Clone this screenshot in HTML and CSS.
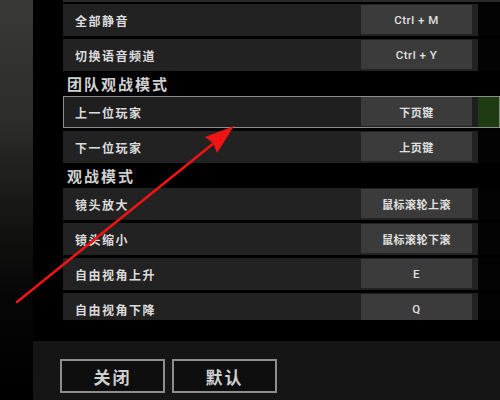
FILE: index.html
```html
<!DOCTYPE html>
<html lang="zh-CN">
<head>
    <meta charset="UTF-8">
    <title>按键设置</title>
    <link rel="stylesheet" href="styles.css">
</head>
<body>
    <div class="screen">
        <div class="backdrop"></div>
        <div class="panel">
            <div class="list">
                <div class="row row-cut"></div>
                <div class="row">
                    <div class="label">全部静音</div>
                    <div class="key key-latin">Ctrl + M</div>
                    <div class="extra"></div>
                </div>
                <div class="row">
                    <div class="label">切换语音频道</div>
                    <div class="key key-latin">Ctrl + Y</div>
                    <div class="extra"></div>
                </div>
                <div class="section">团队观战模式</div>
                <div class="row row-active">
                    <div class="label">上一位玩家</div>
                    <div class="key">下页键</div>
                    <div class="extra extra-on"></div>
                </div>
                <div class="row">
                    <div class="label">下一位玩家</div>
                    <div class="key">上页键</div>
                    <div class="extra"></div>
                </div>
                <div class="section">观战模式</div>
                <div class="row">
                    <div class="label">镜头放大</div>
                    <div class="key">鼠标滚轮上滚</div>
                    <div class="extra"></div>
                </div>
                <div class="row">
                    <div class="label">镜头缩小</div>
                    <div class="key">鼠标滚轮下滚</div>
                    <div class="extra"></div>
                </div>
                <div class="row">
                    <div class="label">自由视角上升</div>
                    <div class="key key-latin">E</div>
                    <div class="extra"></div>
                </div>
                <div class="row">
                    <div class="label">自由视角下降</div>
                    <div class="key key-latin">Q</div>
                    <div class="extra"></div>
                </div>
            </div>
            <div class="footer">
                <button class="btn">关闭</button>
                <button class="btn">默认</button>
            </div>
        </div>

        <!-- 标注箭头 -->
        <svg class="arrow" width="500" height="400" viewBox="0 0 500 400">
            <line x1="17" y1="302" x2="214" y2="143" stroke="#f01414" stroke-width="2.6" stroke-linecap="round"/>
            <polygon points="234,126 205,137 213,143 217,153" fill="#f01414"/>
        </svg>
    </div>
</body>
</html>
```

FILE: styles.css
```css
body {
    margin: 0;
    background: #000;
    font-family: "Noto Sans CJK SC", "Liberation Sans", sans-serif;
}
.screen {
    position: relative;
    width: 500px;
    height: 400px;
    display: flex;
    overflow: hidden;
}
.backdrop {
    width: 33px;
    background: linear-gradient(to bottom, #393935 0%, #2c2c29 30%, #141413 55%, #050505 75%, #000 100%);
}
.panel {
    flex: 1;
    display: flex;
    flex-direction: column;
    background: #000;
}
.list {
    height: 320px;
    margin-bottom: 21px;
    padding-left: 30px;
    overflow: hidden;
}
.row {
    display: flex;
    height: 32px;
    margin-bottom: 3px;
    background: #222;
    box-sizing: border-box;
}
.row-cut {
    height: 2px;
    margin-bottom: 2px;
    background: #2a2a2a;
}
.row-active {
    border: 1px solid #8c8c8c;
    background: #1f1f1f;
}
.label {
    width: 298px;
    padding-left: 12px;
    box-sizing: border-box;
    display: flex;
    align-items: center;
    color: #dcdcdc;
    font-size: 12px;
    font-weight: bold;
    letter-spacing: 1.5px;
}
.row-active .label {
    width: 297px;
    padding-left: 11px;
}
.key {
    width: 111px;
    margin: 1px 0 2px;
    background: #3b3b3b;
    display: flex;
    align-items: center;
    justify-content: center;
    color: #e0e0e0;
    font-size: 11px;
    font-weight: bold;
    letter-spacing: 0.5px;
}
.key-latin {
    font-family: Roboto, sans-serif;
    font-weight: 500;
    font-size: 11.5px;
}
.row-active .key {
    margin: 0 0 1px;
}
.extra {
    flex: 1;
    margin-left: 6px;
    background: #030303;
}
.extra-on {
    background: #1e3c12;
}
.section {
    height: 25px;
    margin-top: -3px;
    padding-left: 4px;
    display: flex;
    align-items: center;
    color: #d0d0d0;
    font-size: 15px;
    font-weight: bold;
    letter-spacing: 2px;
}
.footer {
    flex: 1;
    background: #151515;
    display: flex;
    align-items: flex-start;
    gap: 7px;
    padding: 18px 0 0 27px;
}
.btn {
    width: 105px;
    height: 34px;
    background: #0e0e0e;
    border: 2px solid #8e8e8e;
    color: #cfcfcf;
    font-family: "Noto Sans CJK SC", sans-serif;
    font-size: 17px;
    font-weight: bold;
    letter-spacing: 2px;
    cursor: pointer;
}
.arrow {
    position: absolute;
    left: 0;
    top: 0;
    pointer-events: none;
}
```
